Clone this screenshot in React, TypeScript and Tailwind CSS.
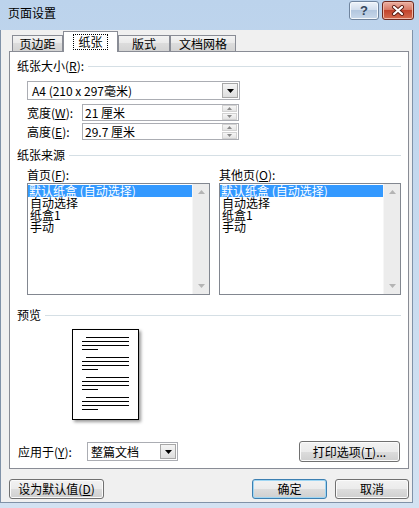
import React from 'react'

const btn =
	'flex items-center justify-center rounded-[3px] border border-[#707070] bg-[linear-gradient(#f2f2f2,#ebebeb_50%,#dddddd_50%,#cfcfcf)] shadow-[inset_0_0_0_1px_#fbfbfb]'

const Mn = ({k}: {k: string}) => (
	<span>
		(<span className="underline underline-offset-[1px]">{k}</span>)
	</span>
)

const DropArrow = () => (
	<div className="w-[16px] h-[15px] border border-[#a7a7a7] bg-[linear-gradient(#f4f4f4,#dedede)] flex items-center justify-center">
		<svg width="7" height="4" viewBox="0 0 7 4">
			<path d="M0 0h7L3.5 4z" fill="#000"/>
		</svg>
	</div>
)

const Spin = () => (
	<div className="flex flex-col w-[15px] h-[15px] gap-px">
		<div className="flex-1 bg-[linear-gradient(#f6f6f6,#e4e4e4)] border border-[#d2d2d2] flex items-center justify-center">
			<svg width="5" height="3" viewBox="0 0 5 3">
				<path d="M0 3h5L2.5 0z" fill="#8a8a8a"/>
			</svg>
		</div>
		<div className="flex-1 bg-[linear-gradient(#f6f6f6,#e4e4e4)] border border-[#d2d2d2] flex items-center justify-center">
			<svg width="5" height="3" viewBox="0 0 5 3">
				<path d="M0 0h5L2.5 3z" fill="#8a8a8a"/>
			</svg>
		</div>
	</div>
)

const GroupHeader = ({children}: {children: React.ReactNode}) => (
	<div className="flex items-center h-[12px]">
		<span>{children}</span>
		<div className="flex-1 h-px bg-[#d5dfe5] ml-[4px]"/>
	</div>
)

const trays = ['默认纸盒 (自动选择)', '自动选择', '纸盒1', '手动']

const ListBox = ({width}: {width: string}) => (
	<div className={`${width} h-[112px] border border-[#828790] bg-white flex`}>
		<div className="flex-1 flex flex-col pt-px">
			{trays.map((t, i) => (
				<div key={t}
					 className={i === 0 ? 'h-[12px] pl-px bg-[#3399ff] text-white whitespace-nowrap' : 'h-[12px] pl-[2px] whitespace-nowrap'}>
					{t}
				</div>
			))}
		</div>
		<div className="w-[17px] bg-[#ececec] border-l border-[#f6f6f6] flex flex-col items-center justify-between py-[6px]">
			<svg width="7" height="4" viewBox="0 0 7 4">
				<path d="M0 4h7L3.5 0z" fill="#b4b4b4"/>
			</svg>
			<svg width="7" height="4" viewBox="0 0 7 4">
				<path d="M0 0h7L3.5 4z" fill="#b4b4b4"/>
			</svg>
		</div>
	</div>
)

const Para = () => (
	<div className="flex flex-col gap-[3px]">
		<div className="h-px w-[43px] ml-[4px] bg-black"/>
		<div className="h-px w-[47px] bg-black"/>
		<div className="h-px w-[47px] bg-black"/>
		<div className="h-px w-[16px] bg-black"/>
	</div>
)

const tabs = [
	{label: '页边距', w: 'w-[51px]'},
	{label: '纸张', w: 'w-[55px]', active: true},
	{label: '版式', w: 'w-[52px]'},
	{label: '文档网格', w: 'w-[66px]'}
]

export default function App() {
	return (
		<div
			className="w-[419px] h-[508px] flex flex-col overflow-hidden bg-[linear-gradient(#bcd3ec,#d3e2f2)] text-[12px] leading-[12px] text-black font-['Noto_Sans_CJK_SC','Noto_Sans',sans-serif] select-none">
			{/* title bar */}
			<div className="h-[30px] flex items-start shrink-0">
				<span className="mt-[7px] ml-[8px]">页面设置</span>
				<div className="ml-auto mr-[5px] mt-px flex gap-[3px]">
					<div
						className="w-[30px] h-[19px] rounded-[3px] border border-[#6f849e] bg-[linear-gradient(#eef3f9,#cfdcec_50%,#b3c7df_50%,#c8d8ea)] shadow-[inset_0_0_0_1px_#f4f8fc] flex items-center justify-center">
						<span className="text-[13px] leading-[13px] font-bold text-[#34465c] font-['Liberation_Sans',sans-serif]">?</span>
					</div>
					<div
						className="w-[32px] h-[19px] rounded-[3px] border border-[#6e2a20] bg-[linear-gradient(#eab0a3,#d6745f_50%,#c2432c_50%,#d46c50)] shadow-[inset_0_0_0_1px_#f0b8a8] flex items-center justify-center">
						<svg width="14" height="11" viewBox="0 0 14 11">
							<path d="M3 2l8 7M11 2l-8 7" stroke="#5a1c14" strokeWidth="4" strokeLinecap="round"/>
							<path d="M3 2l8 7M11 2l-8 7" stroke="#fff" strokeWidth="2.2" strokeLinecap="round"/>
						</svg>
					</div>
				</div>
			</div>

			{/* dialog body */}
			<div className="flex-1 mr-[6px] mb-[5px] bg-[#f0f0f0] border-l border-r border-b border-[#8092a8] flex flex-col pl-[8px] pr-[3px]">
				<div className="h-[21px] flex items-end pl-[3px]">
					{tabs.map((t) =>
						t.active ? (
							<div key={t.label}
								 className={`${t.w} h-[21px] -mb-px relative z-10 bg-white border border-b-0 border-[#898c95] flex items-start justify-center pt-[3px]`}>
								<span className="outline outline-1 outline-dotted outline-black px-[4px] py-px">{t.label}</span>
							</div>
						) : (
							<div key={t.label}
								 className={`${t.w} h-[16px] border border-b-0 border-[#898c95] bg-[linear-gradient(#f3f3f3,#e9e9e9_50%,#dcdcdc_50%,#d3d3d3)] flex items-start justify-center pt-[2px]`}>
								{t.label}
							</div>
						)
					)}
				</div>

				{/* tab panel */}
				<div className="w-[400px] h-[418px] border border-[#898c95] bg-white flex flex-col pl-[7px] pr-[7px]">
					<div className="mt-[8px]">
						<GroupHeader>纸张大小<Mn k="R"/>:</GroupHeader>
					</div>
					<div className="mt-[9px] ml-[10px] w-[213px] h-[19px] border border-[#abadb3] flex items-center pl-[4px] pr-px">
						<span className="flex-1">A4 (210 x 297毫米)</span>
						<DropArrow/>
					</div>
					<div className="mt-[4px] ml-[10px] flex items-center h-[17px]">
						<span className="w-[55px]">宽度<Mn k="W"/>:</span>
						<div className="w-[157px] h-[17px] border border-[#abadb3] flex items-center pl-[2px] pr-px">
							<span className="flex-1">21 厘米</span>
							<Spin/>
						</div>
					</div>
					<div className="mt-[2px] ml-[10px] flex items-center h-[17px]">
						<span className="w-[55px]">高度<Mn k="E"/>:</span>
						<div className="w-[157px] h-[17px] border border-[#abadb3] flex items-center pl-[2px] pr-px">
							<span className="flex-1">29.7 厘米</span>
							<Spin/>
						</div>
					</div>

					<div className="mt-[9px]">
						<GroupHeader>纸张来源</GroupHeader>
					</div>
					<div className="mt-[8px] ml-[10px] flex gap-[9px]">
						<div className="flex flex-col gap-[2px]">
							<span>首页<Mn k="F"/>:</span>
							<ListBox width="w-[183px]"/>
						</div>
						<div className="flex flex-col gap-[2px]">
							<span>其他页<Mn k="O"/>:</span>
							<ListBox width="w-[182px]"/>
						</div>
					</div>

					<div className="mt-[14px]">
						<GroupHeader>预览</GroupHeader>
					</div>
					<div
						className="mt-[8px] ml-[55px] w-[67px] h-[91px] border border-black bg-white shadow-[2px_2px_3px_rgba(0,0,0,0.4)] flex flex-col gap-[7px] pt-[7px] pl-[9px]">
						<Para/>
						<Para/>
						<Para/>
						<Para/>
					</div>

					<div className="mt-[21px] flex items-center h-[21px] pl-px">
						<span className="w-[69px]">应用于<Mn k="Y"/>:</span>
						<div className="w-[91px] h-[19px] border border-[#abadb3] flex items-center pl-[3px] pr-px">
							<span className="flex-1">整篇文档</span>
							<DropArrow/>
						</div>
						<div className={`${btn} ml-auto mr-px w-[101px] h-[21px]`}>
							<span>打印选项<Mn k="T"/>...</span>
						</div>
					</div>
				</div>

				{/* bottom buttons */}
				<div className="mt-[10px] flex items-center">
					<div className={`${btn} w-[95px] h-[20px]`}>
						<span>设为默认值<Mn k="D"/></span>
					</div>
					<div
						className="ml-auto w-[75px] h-[20px] flex items-center justify-center rounded-[3px] border border-[#3c7fb1] bg-[linear-gradient(#f2f2f2,#ebebeb_50%,#dddddd_50%,#cfcfcf)] shadow-[inset_0_0_0_1px_#9fd6f3]">
						确定
					</div>
					<div className={`${btn} ml-[8px] w-[74px] h-[20px]`}>
						取消
					</div>
				</div>
			</div>
		</div>
	)
}
